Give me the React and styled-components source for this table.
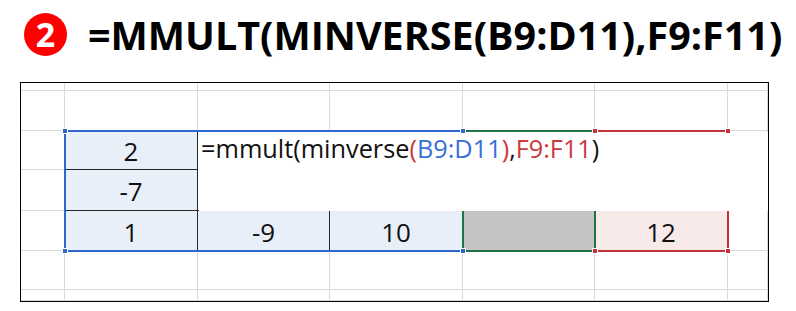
import React from "react";
import styled, { createGlobalStyle } from "styled-components";

const Global = createGlobalStyle`
  html, body { margin: 0; padding: 0; background: #fff; }
  body { font-family: "Open Sans", "Noto Sans", sans-serif; }
`;

const Page = styled.div`
  width: 796px;
  height: 311px;
  background: #fff;
  position: relative;
  overflow: hidden;
`;

const TitleRow = styled.div`
  height: 82px;
  display: flex;
  align-items: flex-start;
  padding-left: 24px;
  box-sizing: border-box;
`;

const Badge = styled.div`
  width: 43px;
  height: 43px;
  margin-top: 13px;
  border-radius: 50%;
  background: #f00;
  color: #fff;
  font-weight: 700;
  font-size: 34px;
  line-height: 43px;
  text-align: center;
  flex: none;
`;

const TitleText = styled.div`
  margin-left: 21px;
  padding-top: 8px;
  font-weight: 700;
  font-size: 39.5px;
  color: #000;
  white-space: nowrap;
  letter-spacing: 0;
`;

const Frame = styled.div`
  margin-left: 20px;
  width: 749px;
  height: 220px;
  border: 1px solid #000;
  box-sizing: border-box;
  position: relative;
  overflow: hidden;
`;

const Grid = styled.div`
  display: grid;
  grid-template-columns: 44px 133px 132px 133px 132px 133px 1fr;
  grid-template-rows: 8px 40px 39px 41px 40px 39px 1fr;
  width: 100%;
  height: 100%;
`;

const Cell = styled.div`
  box-sizing: border-box;
  border-right: 1px solid ${(p) => (p.$darkRight ? "#262626" : "#dadada")};
  border-bottom: 1px solid ${(p) => (p.$darkBottom ? "#262626" : "#dadada")};
  background: ${(p) => p.$fill || "#fff"};
  font-size: 26px;
  color: #111;
  display: flex;
  align-items: center;
  justify-content: center;
  line-height: 1;
  padding-top: 2px;
`;

const Range = styled.div`
  position: absolute;
  box-sizing: border-box;
  border: 2px solid ${(p) => p.$color};
  z-index: ${(p) => p.$z};
`;

const Editor = styled.div`
  position: absolute;
  left: 178px;
  top: 49px;
  width: 570px;
  height: 79px;
  background: #fff;
  z-index: 5;
  font-size: 25.3px;
  line-height: 32px;
  padding-left: 2px;
  color: #111;
  white-space: nowrap;
  box-sizing: border-box;
`;

const Ref = styled.span`
  color: ${(p) => p.$color};
`;

const Handle = styled.div`
  position: absolute;
  width: 6px;
  height: 6px;
  box-sizing: border-box;
  border: 1px solid #fff;
  background: ${(p) => p.$color};
  z-index: 6;
`;

const BLUE = "#2f67cc";
const GREEN = "#217346";
const RED = "#c4323b";
const BLUE_T = "#3a6fd6";
const RED_T = "#cc3a3e";

const FILL_BLUE = "#e9eff8";
const FILL_GRAY = "#c4c4c4";
const FILL_PINK = "#f9eaea";

const cellSpec = (r, c) => {
  const spec = {};
  if (c === 1 && (r === 2 || r === 3 || r === 4)) {
    spec.fill = FILL_BLUE;
    spec.darkRight = true;
    spec.darkBottom = true;
  }
  if (r === 3 && c >= 2 && c <= 5) spec.darkBottom = true;
  if (r === 4 && (c === 2 || c === 3)) {
    spec.fill = FILL_BLUE;
    spec.darkRight = true;
  }
  if (r === 4 && c === 4) spec.fill = FILL_GRAY;
  if (r === 4 && c === 5) spec.fill = FILL_PINK;
  return spec;
};

const values = {
  "2-1": "2",
  "3-1": "-7",
  "4-1": "1",
  "4-2": "-9",
  "4-3": "10",
  "4-5": "12",
};

const ox = 21;
const oy = 83;
const box = (x1, y1, x2, y2) => ({
  left: x1 - 1 - ox,
  top: y1 - 1 - oy,
  width: x2 - x1 + 2,
  height: y2 - y1 + 2,
});
const handlePos = (x, y) => ({ left: x - 3 - ox, top: y - 3 - oy });

export default function App() {
  const cells = [];
  for (let r = 0; r < 7; r++) {
    for (let c = 0; c < 7; c++) {
      const s = cellSpec(r, c);
      cells.push(
        <Cell
          key={`${r}-${c}`}
          $fill={s.fill}
          $darkRight={s.darkRight}
          $darkBottom={s.darkBottom}
        >
          {values[`${r}-${c}`]}
        </Cell>
      );
    }
  }
  const handles = [
    [65, 131, BLUE],
    [463, 131, BLUE],
    [65, 251, BLUE],
    [463, 251, BLUE],
    [595, 131, RED],
    [728, 131, RED],
    [595, 251, RED],
    [728, 251, RED],
  ];
  return (
    <Page>
      <Global />
      <TitleRow>
        <Badge>2</Badge>
        <TitleText>=MMULT(MINVERSE(B9:D11),F9:F11)</TitleText>
      </TitleRow>
      <Frame>
        <Grid>{cells}</Grid>
        <Range $color={BLUE} $z={2} style={box(65, 131, 463, 251)} />
        <Range $color={RED} $z={2} style={box(595, 131, 728, 251)} />
        <Range $color={GREEN} $z={3} style={box(463, 131, 595, 251)} />
        <Editor>
          =mmult(minverse<Ref $color={RED_T}>(</Ref>
          <Ref $color={BLUE_T}>B9:D11</Ref>
          <Ref $color={RED_T}>)</Ref>,<Ref $color={RED_T}>F9:F11</Ref>)
        </Editor>
        {handles.map(([x, y, col], i) => (
          <Handle key={i} $color={col} style={handlePos(x, y)} />
        ))}
      </Frame>
    </Page>
  );
}
